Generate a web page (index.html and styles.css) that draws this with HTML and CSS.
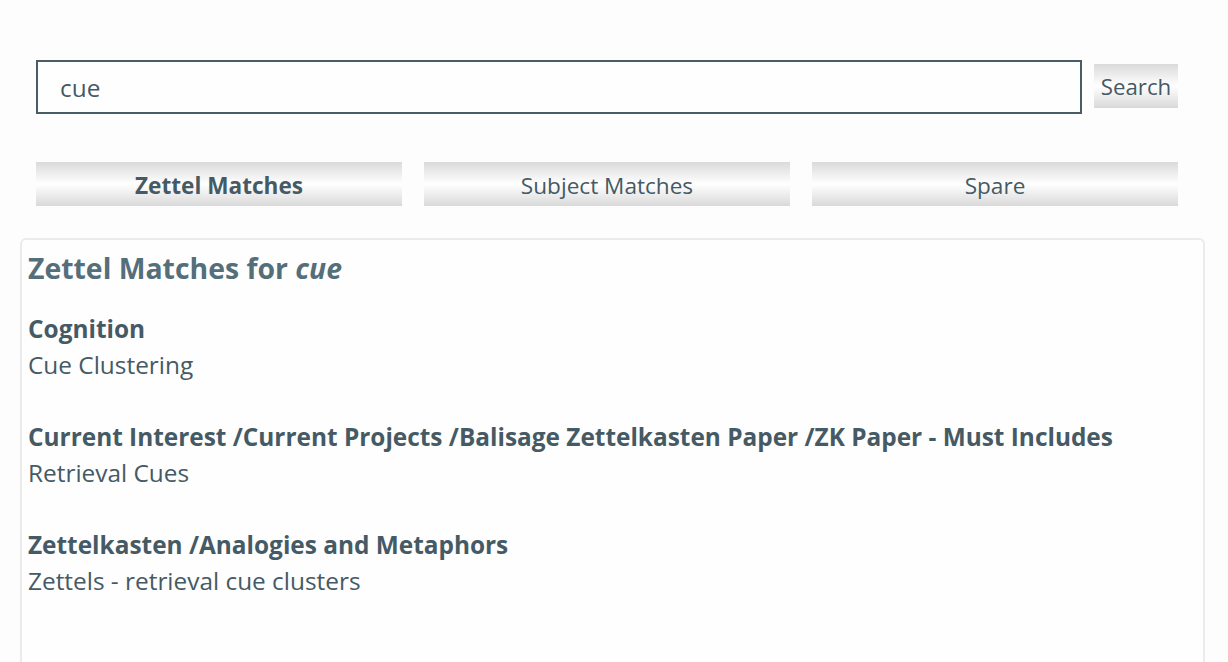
FILE: index.html
```html
<!DOCTYPE html>
<html lang="en">
<head>
<meta charset="utf-8">
<title>Zettel Search</title>
<link rel="stylesheet" href="styles.css">
</head>
<body>
<div class="page">
  <form class="search-row">
    <input class="search-input" type="text" value="cue">
    <button class="btn search-btn" type="button">Search</button>
  </form>
  <div class="tabs">
    <button class="btn tab active" type="button">Zettel Matches</button>
    <button class="btn tab" type="button">Subject Matches</button>
    <button class="btn tab" type="button">Spare</button>
  </div>
  <section class="panel">
    <h2 class="panel-title">Zettel Matches for <em>cue</em></h2>
    <div class="match">
      <div class="match-subject">Cognition</div>
      <div class="match-title">Cue Clustering</div>
    </div>
    <div class="match">
      <div class="match-subject">Current Interest /Current Projects /Balisage Zettelkasten Paper /ZK Paper - Must Includes</div>
      <div class="match-title">Retrieval Cues</div>
    </div>
    <div class="match">
      <div class="match-subject">Zettelkasten /Analogies and Metaphors</div>
      <div class="match-title">Zettels - retrieval cue clusters</div>
    </div>
  </section>
</div>
</body>
</html>
```
FILE: styles.css
```css
html, body {
  margin: 0;
  padding: 0;
  background: #fdfdfd;
  color: #455a64;
  font-family: "Open Sans", "Noto Sans", sans-serif;
  overflow: hidden;
}
.page {
  padding: 60px 23px 0 20px;
}
.search-row {
  display: flex;
  align-items: flex-start;
  margin: 0 0 0 16px;
  gap: 12px;
}
.search-input {
  box-sizing: border-box;
  width: 1046px;
  height: 54px;
  border: 2px solid #4a5d66;
  background: #fefefe;
  padding: 0 22px;
  font-family: inherit;
  font-size: 24.4px;
  color: #455a64;
  outline: none;
}
.btn {
  border: none;
  font-family: inherit;
  color: #455a64;
  background: linear-gradient(to bottom, #dadada 0%, #ffffff 50%, #d9d9d9 100%);
  cursor: pointer;
  padding: 0;
}
.search-btn {
  width: 84px;
  height: 44px;
  margin-top: 4px;
  font-size: 22.3px;
}
.tabs {
  display: flex;
  gap: 22px;
  margin: 48px 2px 32px 16px;
}
.tab {
  width: 366px;
  height: 44px;
  font-size: 22.6px;
  padding-top: 3px;
}
.tab.active {
  font-weight: bold;
}
.panel {
  border: 2px solid #ebebeb;
  border-radius: 6px;
  background: #fefefe;
  padding: 8px 6px 80px;
  min-height: 420px;
}
.panel-title {
  margin: 0 0 23px;
  font-size: 28.4px;
  line-height: 40px;
  color: #546e7a;
  font-weight: bold;
}
.panel-title em {
  font-style: italic;
}
.match {
  font-size: 24.4px;
  line-height: 36px;
  margin-bottom: 36px;
}
.match-subject {
  font-weight: bold;
}
```
